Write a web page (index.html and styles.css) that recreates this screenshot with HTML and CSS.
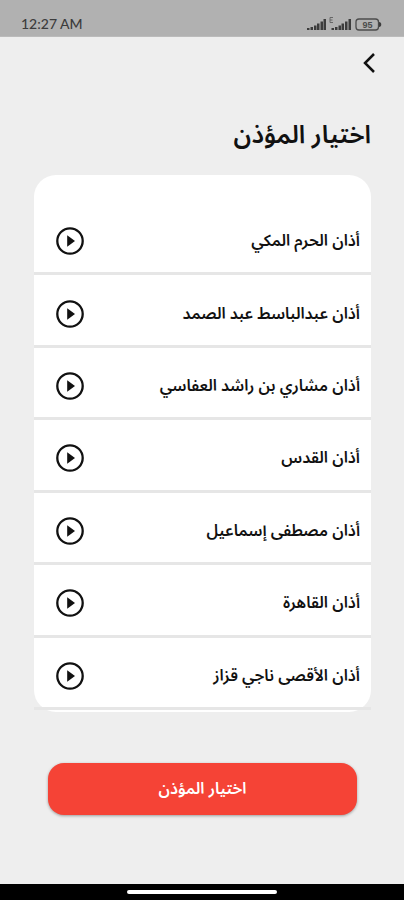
FILE: index.html
```html
<!DOCTYPE html>
<html lang="ar" dir="rtl">
<head>
<meta charset="utf-8">
<meta name="viewport" content="width=device-width, initial-scale=1">
<title>اختيار المؤذن</title>
<link rel="stylesheet" href="styles.css">
</head>
<body>
<svg class="sprite" aria-hidden="true">
  <symbol id="play" viewBox="0 0 28 28">
    <circle cx="14" cy="14" r="12.700" fill="none" stroke="#111" stroke-width="2.300"/>
    <path d="M11.200 8.300 19 14l-7.800 5.700z" fill="#111"/>
  </symbol>
</svg>
<header class="status" dir="ltr">
  <span class="clock">12:27 AM</span>
  <svg class="indicators" viewBox="0 0 76 16" aria-hidden="true">
    <g fill="#3c3c3c">
      <path d="M0 12h2.500v2H0zM3.500 11H6v3H3.500zM7 9.500h2.500V14H7zM10 7.500h2.500V14H10zM13.500 5.500H16V14h-2.500zM16.500 3H19v11h-2.500z"/>
      <path d="M24.500 12H27v2h-2.500zM28 11h2.500v3H28zM31.500 9.500H34V14h-2.500zM34.500 7.500H37V14h-2.500zM38 5.500h2.500V14H38zM41.500 3H44v11h-2.500z"/>
      <path d="M72 6c3 0 3 5 0 5z"/>
    </g>
    <path d="M26 1.500h-3v5h3M23 4h2.500" fill="none" stroke="#666"/>
    <rect x="49" y="3" width="22.500" height="11" rx="3" fill="none" stroke="#4c4c4c" stroke-width="1.300"/>
    <text class="charge" x="60.500" y="12" text-anchor="middle">95</text>
  </svg>
</header>
<main class="screen">
  <button class="back" type="button" aria-label="رجوع">
    <svg viewBox="0 0 14 22" aria-hidden="true"><path d="M12 2 3 11l9 9" fill="none" stroke="#111" stroke-width="2.500"/></svg>
  </button>
  <h1 class="title">اختيار المؤذن</h1>
  <ul class="card">
    <li class="row"><span>أذان الحرم المكي</span><button class="play" type="button" aria-label="تشغيل"><svg><use href="#play"/></svg></button></li>
    <li class="row"><span>أذان عبدالباسط عبد الصمد</span><button class="play" type="button" aria-label="تشغيل"><svg><use href="#play"/></svg></button></li>
    <li class="row"><span>أذان مشاري بن راشد العفاسي</span><button class="play" type="button" aria-label="تشغيل"><svg><use href="#play"/></svg></button></li>
    <li class="row"><span>أذان القدس</span><button class="play" type="button" aria-label="تشغيل"><svg><use href="#play"/></svg></button></li>
    <li class="row"><span>أذان مصطفى إسماعيل</span><button class="play" type="button" aria-label="تشغيل"><svg><use href="#play"/></svg></button></li>
    <li class="row"><span>أذان القاهرة</span><button class="play" type="button" aria-label="تشغيل"><svg><use href="#play"/></svg></button></li>
    <li class="row"><span>أذان الأقصى ناجي قزاز</span><button class="play" type="button" aria-label="تشغيل"><svg><use href="#play"/></svg></button></li>
  </ul>
  <button class="confirm" type="button">اختيار المؤذن</button>
</main>
<footer class="navbar"><span class="handle"></span></footer>
</body>
</html>
```
FILE: styles.css
```css
* { box-sizing: border-box; }

body {
  margin: 0;
  min-height: 100vh;
  display: flex;
  flex-direction: column;
  background: #eee;
  color: #111;
  font-family: "Noto Sans Arabic", "DejaVu Sans", sans-serif;
}

button {
  border: 0;
  padding: 0;
  background: none;
  color: inherit;
  font-family: inherit;
}

.sprite { position: absolute; width: 0; height: 0; }

.status {
  height: 37px;
  padding: 12px 21px 0;
  display: flex;
  justify-content: space-between;
  align-items: flex-start;
  background: #b1b1b1;
  border-bottom: 1px solid #bbb;
}

.clock {
  color: #3c3c3c;
  font: 500 14px/24px Lato, sans-serif;
}

.indicators { width: 76px; height: 16px; margin-top: 4px; }

.charge {
  fill: #4c4c4c;
  font: 700 9px "Liberation Sans", sans-serif;
}

.screen {
  flex: 1;
  display: flex;
  flex-direction: column;
  padding: 15px 33px 69px 34px;
}

.back {
  align-self: flex-start;
  width: 14px;
  height: 22px;
  margin-inline-start: -5px;
}

.back svg { display: block; width: 14px; height: 22px; }

.title {
  margin: 41px 0 20px;
  font-size: 25px;
  line-height: 40px;
  font-weight: 600;
}

.card {
  flex: 1;
  display: flex;
  flex-direction: column;
  margin: 0;
  padding: 28px 0 2px;
  list-style: none;
  background: #fff;
  border-radius: 22px;
}

.row {
  flex: 1;
  display: flex;
  justify-content: space-between;
  align-items: center;
  padding: 7px 11px 0 22px;
  border-bottom: 3px solid #e6e6e6;
  font-size: 16px;
  line-height: 24px;
  font-weight: 600;
}

.play { width: 28px; height: 28px; }

.play svg { display: block; width: 28px; height: 28px; }

.confirm {
  height: 52px;
  margin: 51px 14px 0;
  border-radius: 16px;
  background: #f54336;
  color: #fff;
  font-size: 16px;
  font-weight: 600;
  box-shadow: 0 1px 3px rgba(0, 0, 0, 0.35);
}

.navbar {
  height: 16px;
  display: flex;
  justify-content: center;
  align-items: center;
  background: #000;
}

.handle {
  width: 150px;
  height: 4px;
  border-radius: 2px;
  background: #fff;
}
```
